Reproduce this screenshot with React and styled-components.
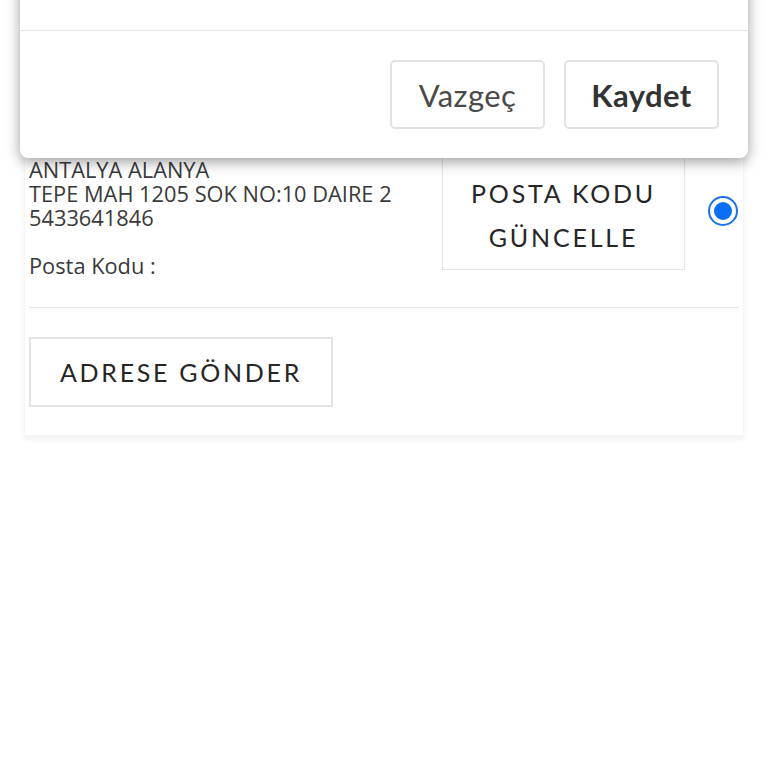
import React from "react";
import styled, { createGlobalStyle } from "styled-components";

const Global = createGlobalStyle`
  html, body { margin: 0; padding: 0; background: #ffffff; }
  body { font-family: "Open Sans", "Liberation Sans", sans-serif; overflow: hidden; }
  * { box-sizing: border-box; }
`;

const Page = styled.div`
  position: relative;
  width: 768px;
  height: 768px;
  padding: 120px 24px 0 24px;
`;

const Card = styled.div`
  background: #fff;
  padding: 0 4px;
  border: 1px solid #f6f6f6;
  border-top: none;
  box-shadow: 0 4px 6px rgba(0, 0, 0, 0.05);
`;

const AddressRow = styled.div`
  display: flex;
  align-items: flex-start;
  padding: 28px 0 29px 0;
  border-bottom: 1px solid #e6e6e6;
`;

const AddressText = styled.div`
  flex: 1;
  margin-top: 10px;
  font-family: "Open Sans", "Liberation Sans", sans-serif;
  font-size: 21.8px;
  line-height: 24px;
  color: #3a3a3a;
`;

const Line = styled.div`
  min-height: 24px;
  white-space: nowrap;
`;

const OutlineButton = styled.button`
  background: #fff;
  border: ${(p) => p.$border || "1.5px"} solid #e4e4e4;
  font-family: "Lato", "Liberation Sans", sans-serif;
  font-weight: 400;
  color: #262626;
  font-size: ${(p) => p.$size || "24px"};
  letter-spacing: ${(p) => p.$spacing || "2px"};
  width: ${(p) => p.$w};
  height: ${(p) => p.$h};
  line-height: 44px;
  padding: ${(p) => p.$pad || "0"};
  text-align: center;
  cursor: pointer;
`;

const RadioWrap = styled.div`
  width: 32px;
  margin-left: 22px;
  margin-top: 47px;
  display: flex;
  justify-content: center;
`;

const Footer = styled.div`
  padding: 29px 0 28px 0;
`;

const Modal = styled.div`
  position: absolute;
  left: 20px;
  right: 20px;
  top: -200px;
  height: 358px;
  background: #fff;
  border-radius: 8px;
  box-shadow: 0 4px 14px rgba(0, 0, 0, 0.38);
  display: flex;
  flex-direction: column;
`;

const ModalBody = styled.div`
  flex: 1;
  border-bottom: 1.5px solid #e5e5e5;
`;

const ModalFooter = styled.div`
  display: flex;
  justify-content: flex-end;
  gap: 19px;
  padding: 29px 29px 29px 0;
`;

const DialogButton = styled.button`
  width: 155px;
  height: 69px;
  background: #fff;
  border: 2.5px solid #e2e2e2;
  border-radius: 5px;
  font-family: "Lato", "Liberation Sans", sans-serif;
  font-size: 31px;
  letter-spacing: 0.4px;
  font-weight: ${(p) => (p.$primary ? 700 : 400)};
  color: ${(p) => (p.$primary ? "#333" : "#4a4a4a")};
  cursor: pointer;
`;

function Radio() {
  return (
    <svg width="32" height="32" viewBox="0 0 32 32">
      <circle cx="16" cy="16" r="14" fill="#fff" stroke="#1a73e8" strokeWidth="2" />
      <circle cx="16" cy="16" r="9" fill="#0b6ff5" />
    </svg>
  );
}

export default function App() {
  return (
    <>
      <Global />
      <Page>
        <Card>
          <AddressRow>
            <AddressText>
              <Line>ANTALYA ALANYA</Line>
              <Line>TEPE MAH 1205 SOK NO:10 DAIRE 2</Line>
              <Line>5433641846</Line>
              <Line />
              <Line>Posta Kodu :</Line>
            </AddressText>
            <OutlineButton $w="243px" $h="122px" $pad="12px 0 0 0" $size="25px" $spacing="2.8px">
              POSTA KODU
              <br />
              GÜNCELLE
            </OutlineButton>
            <RadioWrap>
              <Radio />
            </RadioWrap>
          </AddressRow>
          <Footer>
            <OutlineButton $w="304px" $h="70px" $border="2px" $size="25px" $spacing="2.7px">
              ADRESE GÖNDER
            </OutlineButton>
          </Footer>
        </Card>
        <Modal>
          <ModalBody />
          <ModalFooter>
            <DialogButton>Vazgeç</DialogButton>
            <DialogButton $primary>Kaydet</DialogButton>
          </ModalFooter>
        </Modal>
      </Page>
    </>
  );
}
